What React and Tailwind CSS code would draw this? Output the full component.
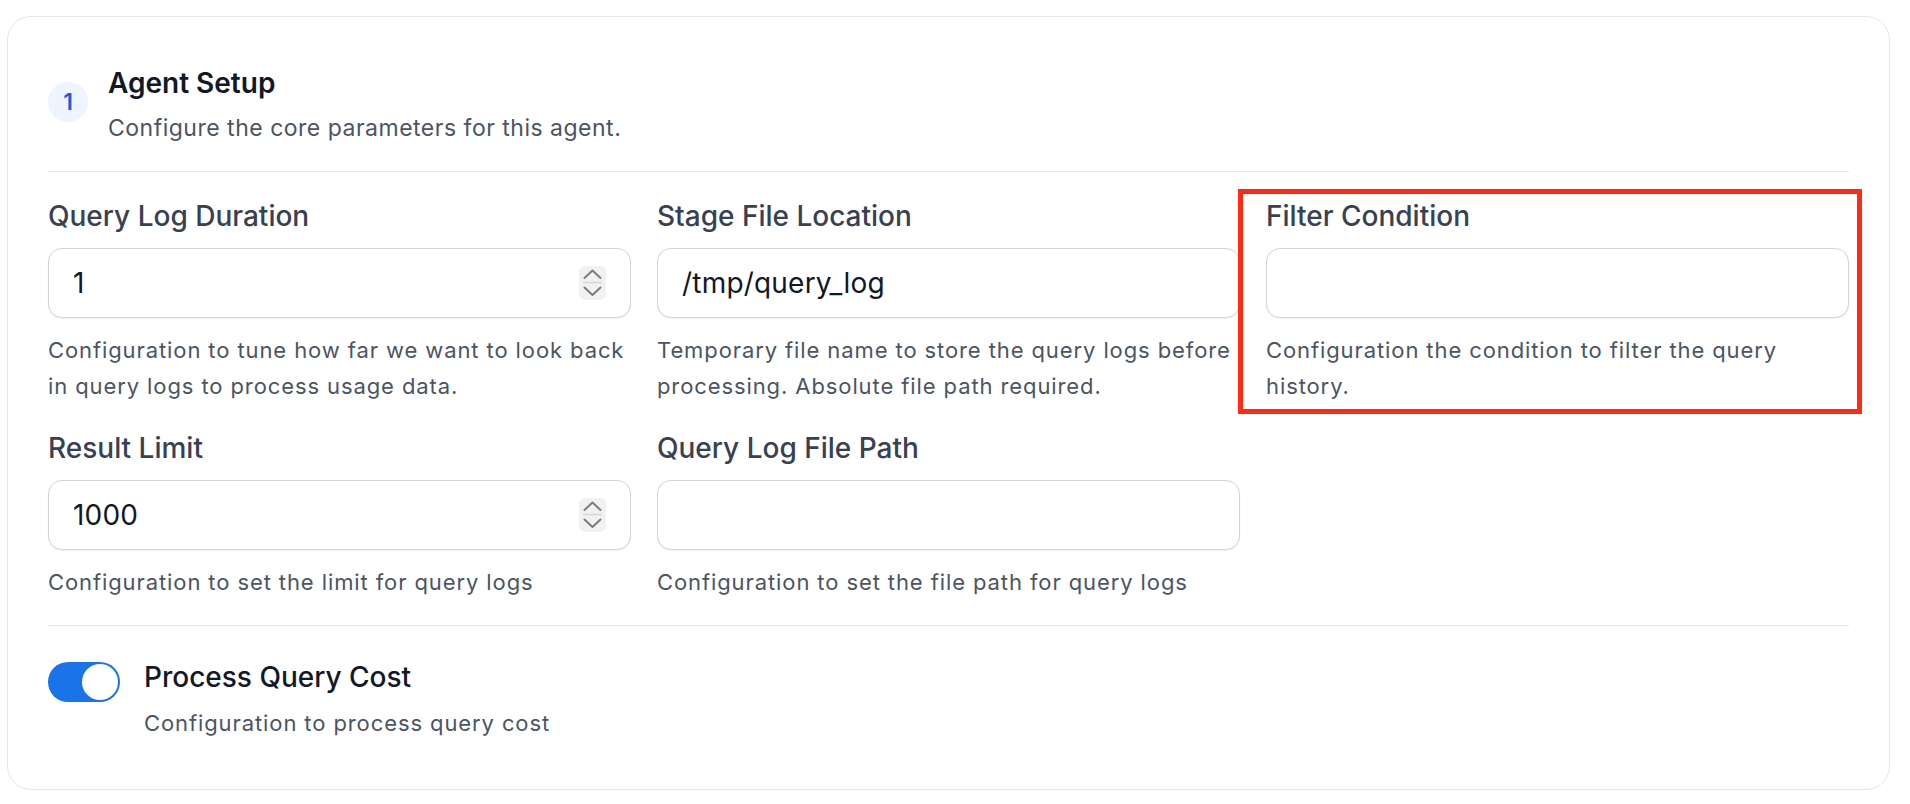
import React from "react";

function Spinner() {
  return (
    <div className="w-[27px] h-[34px] rounded-[6px] bg-[#f1f1f1] flex items-center justify-center">
      <svg width="27" height="34" viewBox="0 0 27 34" fill="none">
        <polyline points="5.5,12 13.5,4.5 21.5,12" stroke="#7d7d7d" strokeWidth="2" strokeLinecap="round" strokeLinejoin="round" />
        <line x1="4" y1="16.5" x2="23" y2="16.5" stroke="#d6d6d6" strokeWidth="1.5" />
        <polyline points="5.5,21.5 13.5,29 21.5,21.5" stroke="#7d7d7d" strokeWidth="2" strokeLinecap="round" strokeLinejoin="round" />
      </svg>
    </div>
  );
}

function Field({ label, value, help, number, highlight }) {
  return (
    <div className="relative flex flex-col">
      <div className="text-[28px] leading-[36px] font-medium text-[#374151]">{label}</div>
      <div className="mt-[14px] h-[70px] rounded-[14px] border border-[#d4d4d8] bg-white shadow-[0_1px_2px_rgba(0,0,0,0.06)] pl-6 pr-6 flex items-center justify-between">
        <span className="text-[28px] tracking-[0.2px] text-[#111827]">{value}</span>
        {number && <Spinner />}
      </div>
      <div className="mt-[14px] text-[22px] leading-[36px] tracking-[0.9px] text-[#4b5563]">{help}</div>
      {highlight && (
        <div className="pointer-events-none absolute -left-[28px] -right-[13px] -top-[9px] -bottom-[10px] border-[5px] border-[#ff2a14]" />
      )}
    </div>
  );
}

export default function App() {
  return (
    <div className="min-h-screen bg-white font-['Inter',sans-serif] pt-[16px]">
      <div className="ml-[7px] w-[1883px] rounded-[24px] border border-[#e5e7eb] bg-white px-10 pt-12 pb-12">
        <div className="flex items-start gap-5">
          <div className="mt-[17px] w-10 h-10 rounded-full bg-[#eef5ff] flex items-center justify-center text-[23px] font-semibold text-[#1d5fd6]">
            1
          </div>
          <div className="flex flex-col">
            <div className="text-[28px] leading-[36px] font-semibold text-[#111827]">Agent Setup</div>
            <div className="mt-[11px] text-[23px] leading-[32px] tracking-[0.5px] text-[#4b5563]">
              Configure the core parameters for this agent.
            </div>
          </div>
        </div>

        <div className="mt-[27px] h-px bg-[#e5e7eb]" />

        <div className="mt-[26px] grid grid-cols-3 gap-x-[26px] gap-y-[26px]">
          <Field
            label="Query Log Duration"
            value="1"
            number
            help="Configuration to tune how far we want to look back in query logs to process usage data."
          />
          <Field
            label="Stage File Location"
            value="/tmp/query_log"
            help="Temporary file name to store the query logs before processing. Absolute file path required."
          />
          <Field
            label="Filter Condition"
            value=""
            highlight
            help="Configuration the condition to filter the query history."
          />
          <Field
            label="Result Limit"
            value="1000"
            number
            help="Configuration to set the limit for query logs"
          />
          <Field
            label="Query Log File Path"
            value=""
            help="Configuration to set the file path for query logs"
          />
        </div>

        <div className="mt-[25px] h-px bg-[#e5e7eb]" />

        <div className="mt-[34px] flex items-start gap-6">
          <div className="mt-[2px] w-[72px] h-[40px] rounded-full bg-[#1a73e8] p-[2px] flex justify-end">
            <div className="w-[36px] h-[36px] rounded-full bg-white" />
          </div>
          <div className="flex flex-col">
            <div className="text-[28px] leading-[34px] font-medium text-[#111827]">Process Query Cost</div>
            <div className="mt-[11px] text-[22px] leading-[36px] tracking-[0.9px] text-[#4b5563]">Configuration to process query cost</div>
          </div>
        </div>
      </div>
    </div>
  );
}
